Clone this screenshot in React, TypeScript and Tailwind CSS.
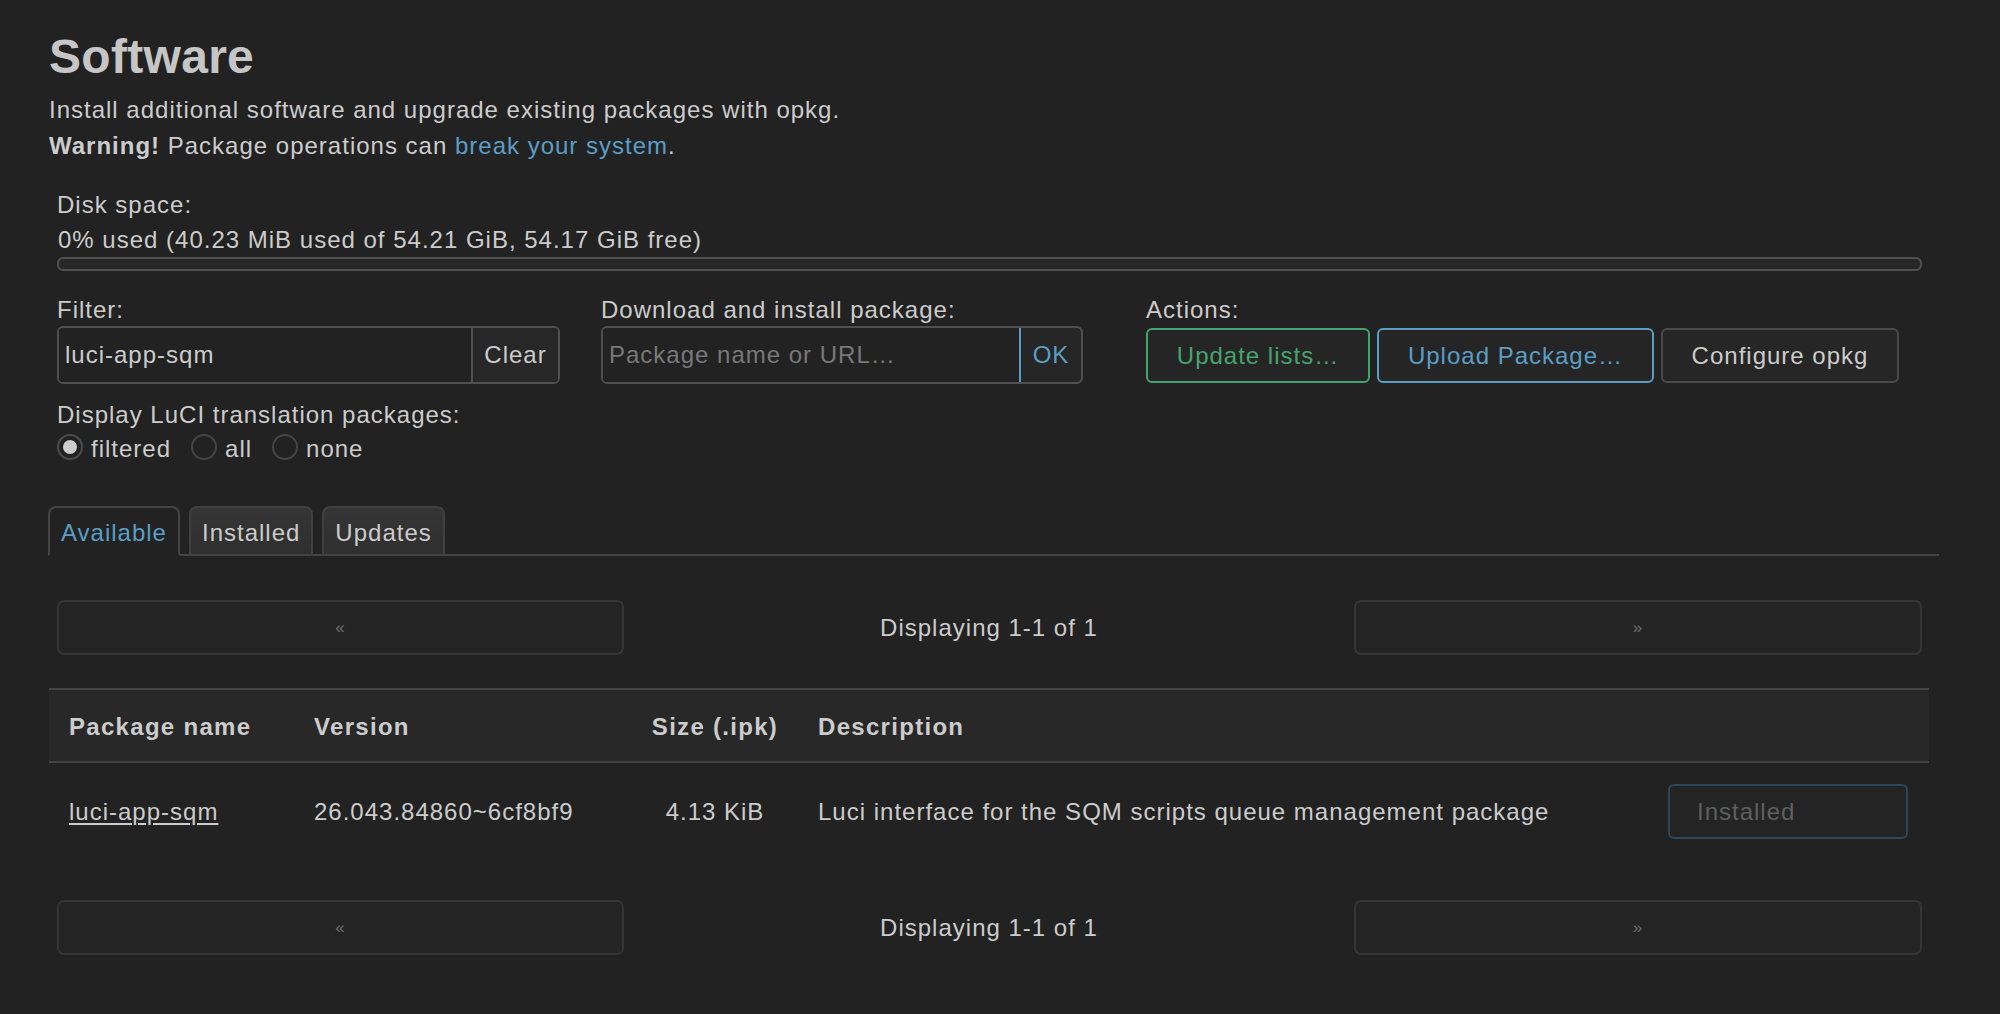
import { useState } from 'react';

const tabs = ['Available', 'Installed', 'Updates'];

const packages = [
  {
    name: 'luci-app-sqm',
    version: '26.043.84860~6cf8bf9',
    size: '4.13 KiB',
    description: 'Luci interface for the SQM scripts queue management package',
  },
];

function Radio({ label, checked, onSelect }: { label: string; checked: boolean; onSelect: () => void }) {
  return (
    <label className="flex items-start gap-[8px] cursor-pointer" onClick={onSelect}>
      <span
        className={`w-[26px] h-[26px] rounded-full border-2 flex items-center justify-center ${
          checked ? 'border-[#4c4c4c]' : 'border-[#454545]'
        }`}
      >
        {checked && <span className="w-[14px] h-[14px] rounded-full bg-[#cdcdcd]" />}
      </span>
      <span className="leading-[30px]">{label}</span>
    </label>
  );
}

function Pager() {
  return (
    <div className="flex items-center mr-[17px] ml-[8px] h-[55px]">
      <button className="w-[567px] h-full rounded-[7px] border-2 border-[#353535] bg-[#242424] text-[#6f6f6f] text-[17px]">
        «
      </button>
      <div className="flex-1 text-center leading-[36px]">Displaying 1-1 of 1</div>
      <button className="w-[568px] h-full rounded-[7px] border-2 border-[#353535] bg-[#242424] text-[#6f6f6f] text-[17px]">
        »
      </button>
    </div>
  );
}

export default function App() {
  const [filter, setFilter] = useState('luci-app-sqm');
  const [lang, setLang] = useState('filtered');
  const [tab, setTab] = useState('Available');

  return (
    <div className="min-h-screen bg-[#222222] text-[#cccccc] text-[24px] leading-[36px] tracking-[1px] font-['Liberation_Sans',Arial,sans-serif]">
      <div className="pl-[49px] pr-[61px] pt-[33px]">
        <h2 className="text-[48px] leading-[48px] font-bold tracking-[0.3px] text-[#c6c6c6]">Software</h2>

        <div className="mt-[11px]">
          <p>Install additional software and upgrade existing packages with opkg.</p>
          <p>
            <strong>Warning!</strong> Package operations can{' '}
            <a className="text-[#5a9ec6]">break your system</a>.
          </p>
        </div>

        {/* disk usage */}
        <div className="mt-[23px] ml-[8px] mr-[17px] leading-[35px]">
          <div>Disk space:</div>
          <div className="pl-[1px]">0% used (40.23 MiB used of 54.21 GiB, 54.17 GiB free)</div>
          <div className="h-[14px] rounded-[6px] border-2 border-[#4f4f4f] bg-[#272727]" />
        </div>

        {/* filter / install / actions */}
        <div className="mt-[23px] ml-[8px] grid grid-cols-[544px_545px_1fr]">
          <div>
            <div className="h-[32px] leading-[32px]">Filter:</div>
            <div className="flex w-[503px] h-[58px] rounded-[6px] border-2 border-[#4f4f4f] overflow-hidden">
              <input
                value={filter}
                onChange={(e) => setFilter(e.target.value)}
                className="flex-1 min-w-0 bg-[#222] px-[6px] outline-none text-[#cccccc] tracking-[1px]"
              />
              <button className="w-[87px] border-l-2 border-[#4f4f4f] bg-[#272727]" onClick={() => setFilter('')}>
                Clear
              </button>
            </div>
          </div>
          <div>
            <div className="h-[32px] leading-[32px]">Download and install package:</div>
            <div className="flex w-[482px] h-[58px] rounded-[6px] border-2 border-[#4f4f4f] overflow-hidden">
              <input
                placeholder="Package name or URL…"
                className="flex-1 min-w-0 bg-[#222] px-[6px] outline-none tracking-[1px] placeholder:text-[#787878]"
              />
              <button className="w-[64px] border-2 border-[#5a9ec6] -my-[2px] -mr-[2px] rounded-r-[6px] bg-[#262626] text-[#5a9ec6]">
                OK
              </button>
            </div>
          </div>
          <div>
            <div className="h-[32px] leading-[32px]">Actions:</div>
            <div className="flex gap-[7px] mt-[2px]">
              <button className="w-[224px] h-[55px] rounded-[6px] border-2 border-[#45a46d] bg-[#252525] text-[#45a46d]">
                Update lists…
              </button>
              <button className="w-[277px] h-[55px] rounded-[6px] border-2 border-[#5a9ec6] bg-[#252525] text-[#5a9ec6]">
                Upload Package…
              </button>
              <button className="w-[238px] h-[55px] rounded-[6px] border-2 border-[#4a4a4a] bg-[#262626]">
                Configure opkg
              </button>
            </div>
          </div>
        </div>

        <div className="mt-[13px] ml-[8px]">
          <div>Display LuCI translation packages:</div>
          <div className="flex gap-[20px] mt-[1px]">
            {['filtered', 'all', 'none'].map((v) => (
              <Radio key={v} label={v} checked={lang === v} onSelect={() => setLang(v)} />
            ))}
          </div>
        </div>

        {/* tab strip */}
        <ul className="mt-[42px] flex gap-[9px] border-b-2 border-[#444]">
          {tabs.map((t, i) => {
            const active = tab === t;
            return (
              <li
                key={t}
                onClick={() => setTab(t)}
                className={`-mb-[2px] h-[50px] pt-[7px] px-[11px] rounded-t-[8px] border-2 cursor-pointer ${
                  i === 0 ? 'ml-[-1px]' : ''
                } ${
                  active
                    ? 'bg-[#222] border-[#444] border-b-[#222] text-[#5a9ec6]'
                    : 'bg-gradient-to-b from-[#353535] to-[#2f2f2f] border-[#404040] border-b-[#444]'
                }`}
              >
                {t}
              </li>
            );
          })}
        </ul>

        <div className="mt-[44px]">
          <Pager />
        </div>

        {/* package table */}
        <table className="mt-[33px] mr-[10px] w-[1880px] table-fixed border-collapse">
          <colgroup>
            <col className="w-[245px]" />
            <col className="w-[338px]" />
            <col className="w-[166px]" />
            <col />
            <col className="w-[281px]" />
          </colgroup>
          <thead>
            <tr className="bg-[#282828] border-y-2 border-[#444] h-[73px]">
              <th className="text-left font-bold tracking-[1.3px] pl-[20px] pt-[2px]">Package name</th>
              <th className="text-left font-bold tracking-[1.3px] pl-[20px] pt-[2px]">Version</th>
              <th className="text-center font-bold tracking-[1.3px] pt-[2px]">Size (.ipk)</th>
              <th className="text-left font-bold tracking-[1.3px] pl-[20px] pt-[2px]">Description</th>
              <th />
            </tr>
          </thead>
          <tbody>
            {packages.map((p) => (
              <tr key={p.name} className="h-[98px]">
                <td className="pl-[20px]">
                  <a className="underline underline-offset-[3px]">{p.name}</a>
                </td>
                <td className="pl-[20px]">{p.version}</td>
                <td className="text-center">{p.size}</td>
                <td className="pl-[20px] whitespace-nowrap">{p.description}</td>
                <td className="pl-[20px]">
                  <button
                    disabled
                    className="w-[240px] h-[55px] rounded-[6px] border-2 border-[#2c465c] bg-[#242424] text-[#5f5f5f] text-left pl-[27px]"
                  >
                    Installed
                  </button>
                </td>
              </tr>
            ))}
          </tbody>
        </table>

        <div className="mt-[40px] pb-[40px]">
          <Pager />
        </div>
      </div>
    </div>
  );
}
